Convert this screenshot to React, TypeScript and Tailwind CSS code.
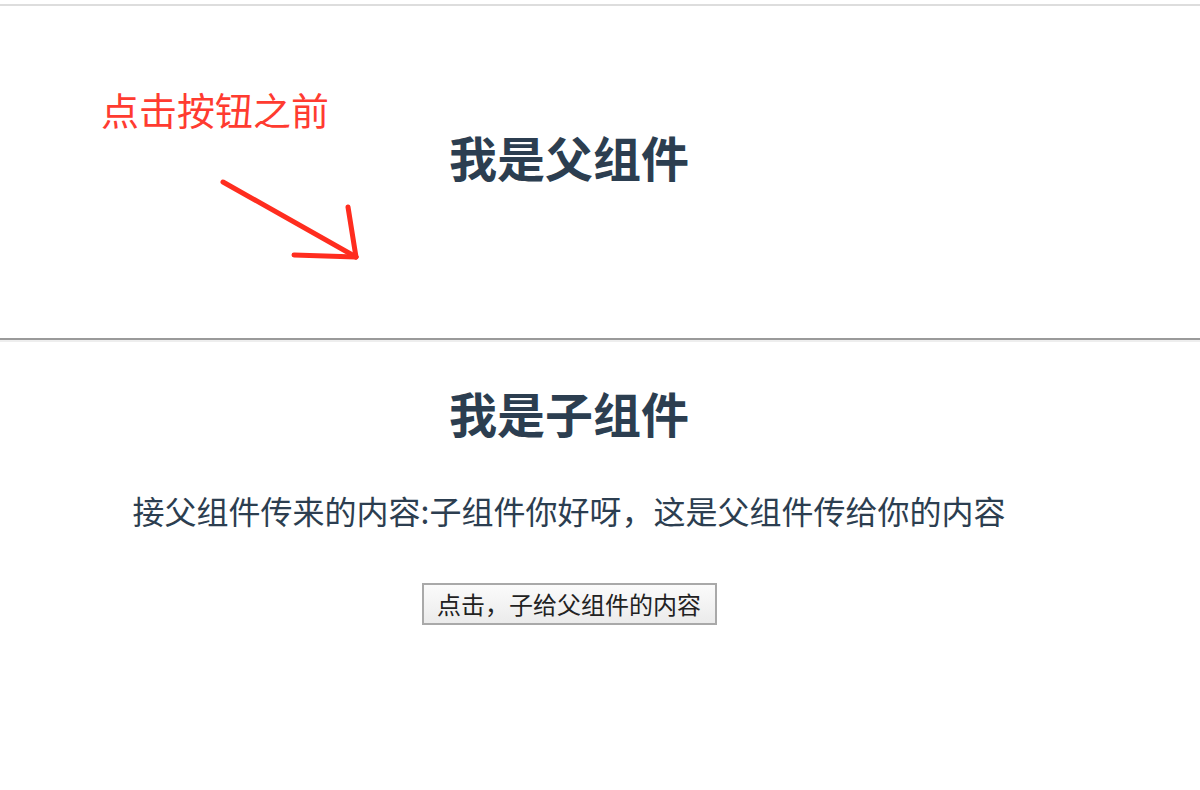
const cjk = { fontFamily: '"Noto Sans CJK SC", "Noto Sans", sans-serif' };

function Arrow() {
  return (
    <svg
      className="absolute left-0 top-0 pointer-events-none"
      width="1200"
      height="340"
      viewBox="0 0 1200 340"
    >
      <g stroke="#ff2d1f" strokeWidth="5" strokeLinecap="round" fill="none">
        <line x1="223" y1="182" x2="356" y2="257" />
        <line x1="348" y1="207" x2="356" y2="257" />
        <line x1="294" y1="255" x2="356" y2="257" />
      </g>
    </svg>
  );
}

export default function App() {
  return (
    <div className="relative w-[1200px] h-[790px] bg-white overflow-hidden" style={cjk}>
      <div className="mt-[4px] h-[2px] bg-[#dddddd]" />
      {/* 父组件 */}
      <div className="h-[332px] w-[1138px] pt-[126px]">
        <h2 className="text-center text-[48px] leading-[48px] font-bold text-[#2c3e50]">
          我是父组件
        </h2>
      </div>
      <div className="h-[2px] bg-[#9a9a9a]" />
      <div className="h-[2px] bg-[#eeeeee]" />
      {/* 子组件 */}
      <div className="w-[1138px] flex flex-col items-center">
        <h2 className="mt-[46px] text-[48px] leading-[48px] font-bold text-[#2c3e50]">
          我是子组件
        </h2>
        <p className="mt-[58px] text-[32px] leading-[32px] text-[#2c3e50]">
          接父组件传来的内容:子组件你好呀，这是父组件传给你的内容
        </p>
        <button className="mt-[57px] w-[295px] h-[42px] border-2 border-[#a9a9a9] bg-gradient-to-b from-[#fbfbfb] to-[#ebebeb] text-[24px] leading-[24px] text-[#222222]">
          点击，子给父组件的内容
        </button>
      </div>
      <div className="absolute left-[101px] top-[85px] text-[38px] leading-[48px] text-[#ff3b30]">
        点击按钮之前
      </div>
      <Arrow />
    </div>
  );
}
